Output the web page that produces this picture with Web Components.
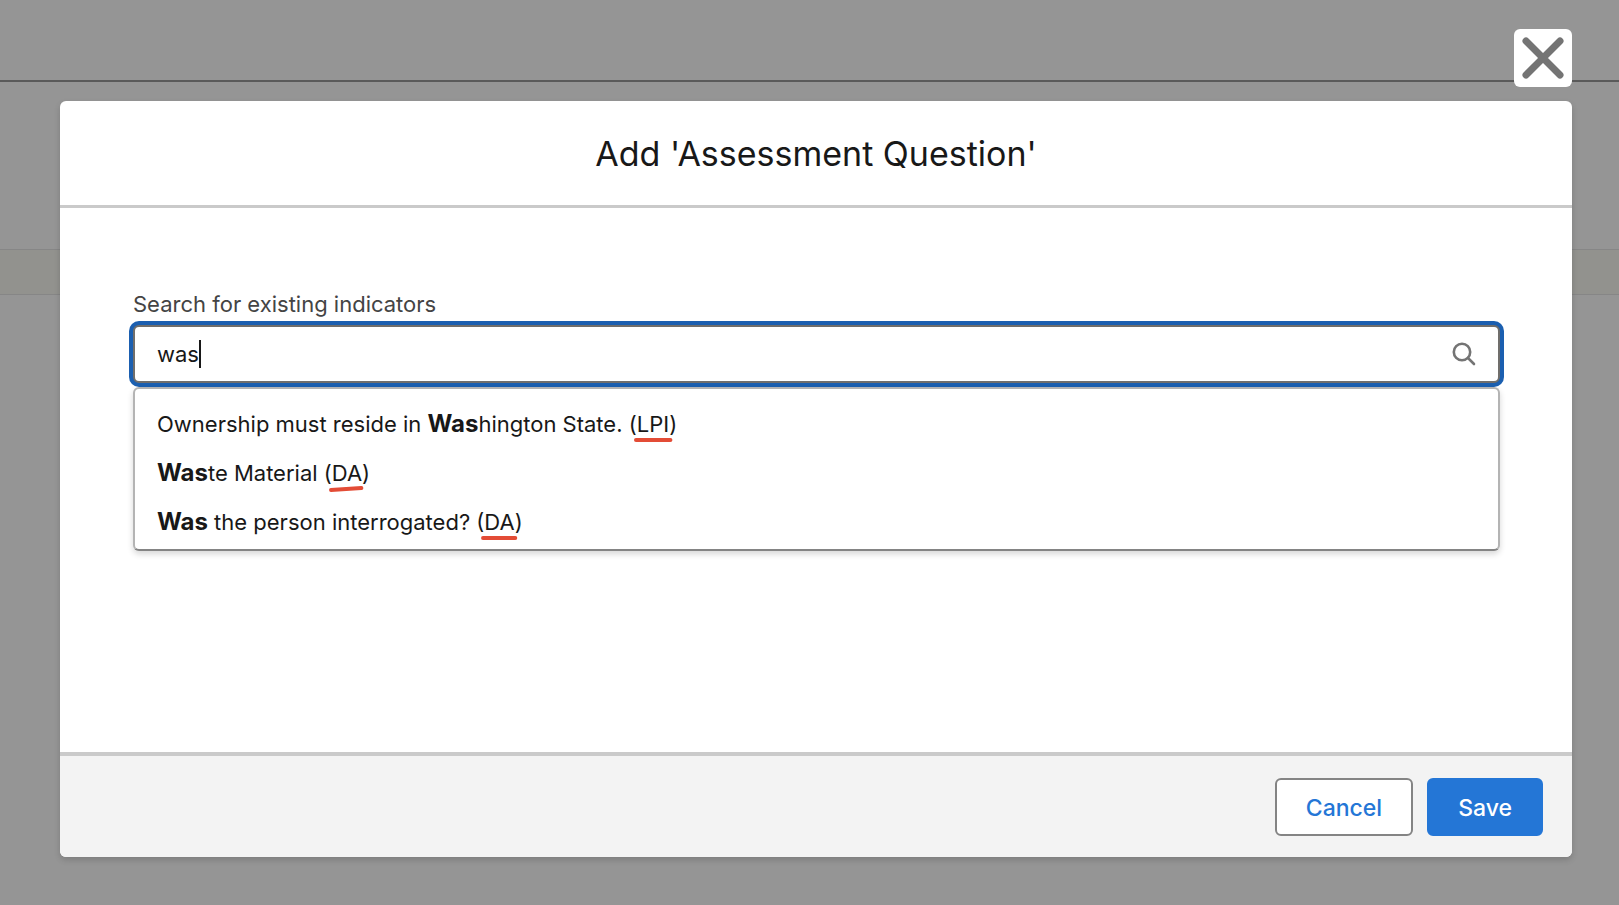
<!DOCTYPE html>
<html lang="en">
<head>
<meta charset="utf-8">
<meta name="viewport" content="width=device-width, initial-scale=1">
<title>Add 'Assessment Question'</title>
<style>
  body {
    margin: 0;
    background: #959595;
    color: #181818;
    font-family: Inter, "Liberation Sans", sans-serif;
    font-size: 22px;
    line-height: 32px;
  }
</style>
</head>
<body>
<page-shell>
  <modal-dialog heading="Add 'Assessment Question'">
    <lookup-field label="Search for existing indicators" value="was">
      <lookup-option>Ownership must reside in <b>Was</b>hington State. (<marked-code>LPI</marked-code>)</lookup-option>
      <lookup-option><b>Was</b>te Material (<marked-code slant>DA</marked-code>)</lookup-option>
      <lookup-option><b>Was</b> the person interrogated? (<marked-code>DA</marked-code>)</lookup-option>
    </lookup-field>
    <action-button slot="footer">Cancel</action-button>
    <action-button slot="footer" variant="brand">Save</action-button>
  </modal-dialog>
</page-shell>

<script>
/**
 * Creates a template element from a string of markup.
 *
 * @param {string} html - The markup.
 * @returns {HTMLTemplateElement} The template.
 */
const createTemplate = (html) => {
  const template = document.createElement('template')
  template.innerHTML = html
  return template
}

const shellTemplate = createTemplate(`
  <style>
    :host {
      display: grid;
      min-height: 100vh;
    }
    .page, .overlay {
      grid-area: 1 / 1;
    }
    .top {
      height: 80px;
      border-bottom: 2px solid #5a5a5a;
    }
    .band {
      height: 44px;
      margin-top: 167px;
      border: solid #868686;
      border-width: 1px 0;
      background: #92928e;
    }
    .overlay {
      display: flex;
      min-width: 0;
      padding: 29px 47px 48px 60px;
    }
    ::slotted(*) {
      flex: 1;
      min-width: 0;
    }
  </style>
  <div class="page">
    <div class="top"></div>
    <div class="band"></div>
  </div>
  <div class="overlay"><slot></slot></div>
`)

/**
 * `PageShell` is the dimmed page with the overlay on top of it.
 */
class PageShell extends HTMLElement {
  constructor () {
    super()
    this.attachShadow({ mode: 'open' }).appendChild(shellTemplate.content.cloneNode(true))
  }
}
customElements.define('page-shell', PageShell)

const modalTemplate = createTemplate(`
  <style>
    :host {
      display: flex;
      flex-direction: column;
      gap: 14px;
    }
    .close {
      display: grid;
      place-items: center;
      align-self: flex-end;
      width: 58px;
      height: 58px;
      padding: 0;
      border: 0;
      border-radius: 6px;
      background: #fff;
      color: #747474;
      cursor: pointer;
    }
    .dialog {
      display: flex;
      flex: 1;
      flex-direction: column;
      overflow: hidden;
      border-radius: 6px;
      background: #fff;
      box-shadow: 0 3px 6px rgba(0, 0, 0, 0.16);
    }
    header {
      padding: 33px 32px 31px;
      border-bottom: 3px solid #cacaca;
      text-align: center;
    }
    h2 {
      margin: 0;
      font-size: 34px;
      font-weight: 400;
      line-height: 40px;
    }
    main {
      flex: 1;
      padding: 80px 72px 72px 73px;
    }
    footer {
      display: flex;
      justify-content: flex-end;
      gap: 14px;
      padding: 22px 29px 21px;
      border-top: 4px solid #cacaca;
      background: #f3f3f3;
    }
  </style>
  <button class="close" type="button" aria-label="Close">
    <svg width="42" height="42" viewBox="0 0 42 42" fill="none" stroke="currentColor" stroke-width="7" stroke-linecap="round">
      <path d="M4 4L38 38M38 4L4 38"/>
    </svg>
  </button>
  <section class="dialog" role="dialog" aria-labelledby="heading">
    <header><h2 id="heading"></h2></header>
    <main><slot></slot></main>
    <footer><slot name="footer"></slot></footer>
  </section>
`)

/**
 * `ModalDialog` is a dialog with a heading, a body and a row of actions.
 */
class ModalDialog extends HTMLElement {
  constructor () {
    super()
    this.attachShadow({ mode: 'open' }).appendChild(modalTemplate.content.cloneNode(true))
  }

  /**
   * Sets the heading and lets the close button remove the dialog.
   */
  connectedCallback () {
    this.shadowRoot.querySelector('#heading').textContent = this.getAttribute('heading')
    this.shadowRoot.querySelector('.close').addEventListener('click', () => this.remove())
  }
}
customElements.define('modal-dialog', ModalDialog)

const lookupTemplate = createTemplate(`
  <style>
    :host {
      display: block;
    }
    label {
      display: block;
      margin-bottom: 5px;
      color: #444;
    }
    .box {
      display: flex;
      align-items: center;
      height: 54px;
      padding: 0 22px;
      border: 2px solid #706e6b;
      border-radius: 6px;
      background: #fff;
      box-shadow: 0 0 0 4px #1b5fb0;
    }
    input {
      field-sizing: content;
      min-width: 1px;
      padding: 0;
      border: 0;
      outline: 0;
      background: none;
      color: inherit;
      font: inherit;
      caret-color: transparent;
    }
    .caret {
      width: 2px;
      height: 28px;
      background: #181818;
    }
    svg {
      margin-left: auto;
    }
    .list {
      margin-top: 4px;
      padding: 11px 22px 2px;
      border: 2px solid #b4b4b4;
      border-bottom-color: #848484;
      border-radius: 6px;
      background: #fff;
      box-shadow: 0 3px 6px rgba(0, 0, 0, 0.16);
    }
  </style>
  <label for="search"></label>
  <div class="box">
    <input id="search" type="text" autocomplete="off">
    <span class="caret"></span>
    <svg width="24" height="24" viewBox="0 0 24 24" fill="none" stroke="#747474" stroke-width="2.6" stroke-linecap="round">
      <circle cx="10" cy="10" r="8.2"/>
      <path d="M16 16L22 22"/>
    </svg>
  </div>
  <div class="list" role="listbox"><slot></slot></div>
`)

/**
 * `LookupField` is a labelled search box with a list of suggestions.
 */
class LookupField extends HTMLElement {
  constructor () {
    super()
    this.attachShadow({ mode: 'open' }).appendChild(lookupTemplate.content.cloneNode(true))
  }

  /**
   * Copies the label and the value into the shadow root.
   */
  connectedCallback () {
    this.shadowRoot.querySelector('label').textContent = this.getAttribute('label')
    this.shadowRoot.querySelector('input').value = this.getAttribute('value') || ''
    this.shadowRoot.querySelector('.box').addEventListener('click', () => {
      this.shadowRoot.querySelector('input').focus()
    })
  }
}
customElements.define('lookup-field', LookupField)

const optionTemplate = createTemplate(`
  <style>
    :host {
      display: block;
      line-height: 49px;
      cursor: pointer;
    }
    ::slotted(b) {
      font-size: 24px;
      font-weight: 700;
      line-height: 32px;
    }
  </style>
  <slot></slot>
`)

/**
 * `LookupOption` is one suggestion of a lookup field.
 */
class LookupOption extends HTMLElement {
  constructor () {
    super()
    this.attachShadow({ mode: 'open' }).appendChild(optionTemplate.content.cloneNode(true))
  }

  connectedCallback () {
    this.setAttribute('role', 'option')
  }
}
customElements.define('lookup-option', LookupOption)

const markedTemplate = createTemplate(`
  <style>
    :host {
      display: inline-block;
      position: relative;
      line-height: 32px;
    }
    svg {
      position: absolute;
      top: 100%;
      left: -2px;
      width: calc(100% + 4px);
      height: 6px;
      margin-top: -3px;
    }
  </style>
  <slot></slot>
  <svg viewBox="0 0 36 6" preserveAspectRatio="none" fill="none" stroke="#e34c36" stroke-width="4" stroke-linecap="round" overflow="visible">
    <path/>
  </svg>
`)

/**
 * `MarkedCode` is a short code with a red pen stroke under it.
 */
class MarkedCode extends HTMLElement {
  constructor () {
    super()
    this.attachShadow({ mode: 'open' }).appendChild(markedTemplate.content.cloneNode(true))
  }

  connectedCallback () {
    const stroke = this.hasAttribute('slant') ? 'M1 4L33 2' : 'M1 3H35'
    this.shadowRoot.querySelector('path').setAttribute('d', stroke)
  }
}
customElements.define('marked-code', MarkedCode)

const buttonTemplate = createTemplate(`
  <style>
    :host {
      display: inline-flex;
    }
    button {
      height: 58px;
      padding: 1px 29px 0;
      border: 2px solid #848484;
      border-radius: 6px;
      background: #fff;
      color: #2476d6;
      font: inherit;
      font-size: 23px;
      font-weight: 500;
      cursor: pointer;
    }
    :host([variant="brand"]) button {
      border-color: #2476d6;
      background: #2476d6;
      color: #fff;
    }
  </style>
  <button type="button"><slot></slot></button>
`)

/**
 * `ActionButton` is a button in the neutral or the brand style.
 */
class ActionButton extends HTMLElement {
  constructor () {
    super()
    this.attachShadow({ mode: 'open' }).appendChild(buttonTemplate.content.cloneNode(true))
  }
}
customElements.define('action-button', ActionButton)
</script>
</body>
</html>
